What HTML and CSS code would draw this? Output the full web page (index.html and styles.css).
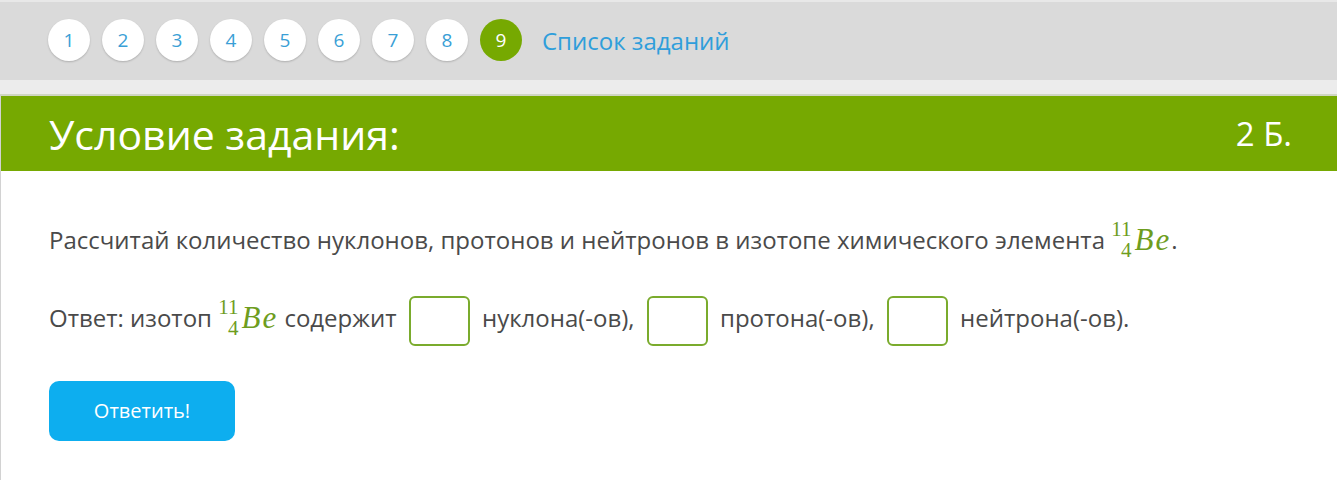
FILE: index.html
```html
<!DOCTYPE html>
<html lang="ru">

<head>
    <meta charset="UTF-8">
    <title>Условие задания</title>
    <link rel="stylesheet" href="styles.css">
</head>

<body>
    <div class="topbar">
        <a class="num">1</a>
        <a class="num">2</a>
        <a class="num">3</a>
        <a class="num">4</a>
        <a class="num">5</a>
        <a class="num">6</a>
        <a class="num">7</a>
        <a class="num">8</a>
        <a class="num active">9</a>
        <a class="list-link">Список заданий</a>
    </div>
    <div class="strip"></div>
    <div class="panel">
        <div class="panel-head">
            <h1>Условие задания:</h1>
            <span class="points">2 Б.</span>
        </div>
        <div class="panel-body">
            <p class="line">Рассчитай количество нуклонов, протонов и нейтронов в изотопе химического элемента
                <span class="iso"><span class="idx"><span>11</span><span>4</span></span><i>Be</i></span>.</p>
            <p class="line answer">Ответ: изотоп
                <span class="iso"><span class="idx"><span>11</span><span>4</span></span><i>Be</i></span> содержит
                <input type="text" class="box"> нуклона(-ов),
                <input type="text" class="box"> протона(-ов),
                <input type="text" class="box"> нейтрона(-ов).</p>
            <button class="send">Ответить!</button>
        </div>
    </div>
</body>

</html>
```

FILE: styles.css
```css
/* сброс */
* {
    margin: 0;
    padding: 0;
    box-sizing: border-box;
}

body {
    font-family: "Open Sans", "Liberation Sans", sans-serif;
    background: #ffffff;
    color: #4a4a4a;
}

/* верхняя панель с номерами */
.topbar {
    height: 80px;
    background: #dadada;
    border-top: 2px solid #e8e8e8;
    display: flex;
    align-items: center;
    gap: 12px;
    padding-left: 48px;
    padding-bottom: 2px;
}

.num {
    width: 42px;
    height: 42px;
    border-radius: 50%;
    background: #ffffff;
    box-shadow: 0 1px 2px rgba(0, 0, 0, 0.2);
    display: flex;
    justify-content: center;
    align-items: center;
    color: #3a9fd6;
    font-size: 19px;
}

.num.active {
    background: #76a901;
    color: #ffffff;
    box-shadow: none;
}

.list-link {
    margin-left: 8px;
    color: #2f9edb;
    font-size: 24px;
}

.strip {
    height: 16px;
    background: #ececec;
    border-bottom: 2px solid #cfd6c2;
}

/* блок задания */
.panel {
    border-left: 1px solid #d2d2d2;
}

.panel-head {
    height: 75px;
    background: #76a901;
    color: #ffffff;
    display: flex;
    justify-content: space-between;
    align-items: center;
    padding: 0 45px 0 48px;
}

.panel-head h1 {
    font-weight: normal;
    font-size: 41px;
}

.points {
    font-size: 33px;
}

.panel-body {
    padding: 45px 48px 40px;
}

.line {
    font-size: 24px;
    line-height: 48px;
}

.answer {
    margin-top: 30px;
}

/* изотоп */
.iso {
    display: inline-flex;
    align-items: center;
    color: #6e9d1e;
    font-family: "Liberation Serif", "DejaVu Serif", serif;
    vertical-align: middle;
    margin-top: -6px;
}

.idx {
    display: inline-flex;
    flex-direction: column;
    align-items: flex-end;
    gap: 3px;
    font-size: 21px;
    line-height: 18px;
}

.iso i {
    font-size: 31px;
    margin-left: 3px;
    letter-spacing: 2px;
    line-height: 30px;
}

.box {
    width: 61px;
    height: 50px;
    border: 2px solid #7aab2d;
    border-radius: 6px;
    vertical-align: middle;
    margin: 0 6px;
    outline: none;
}

.send {
    margin-top: 35px;
    width: 186px;
    height: 60px;
    border: none;
    border-radius: 10px;
    background: #0daeef;
    color: #ffffff;
    font-family: "Open Sans", "Liberation Sans", sans-serif;
    font-size: 20px;
}
```
